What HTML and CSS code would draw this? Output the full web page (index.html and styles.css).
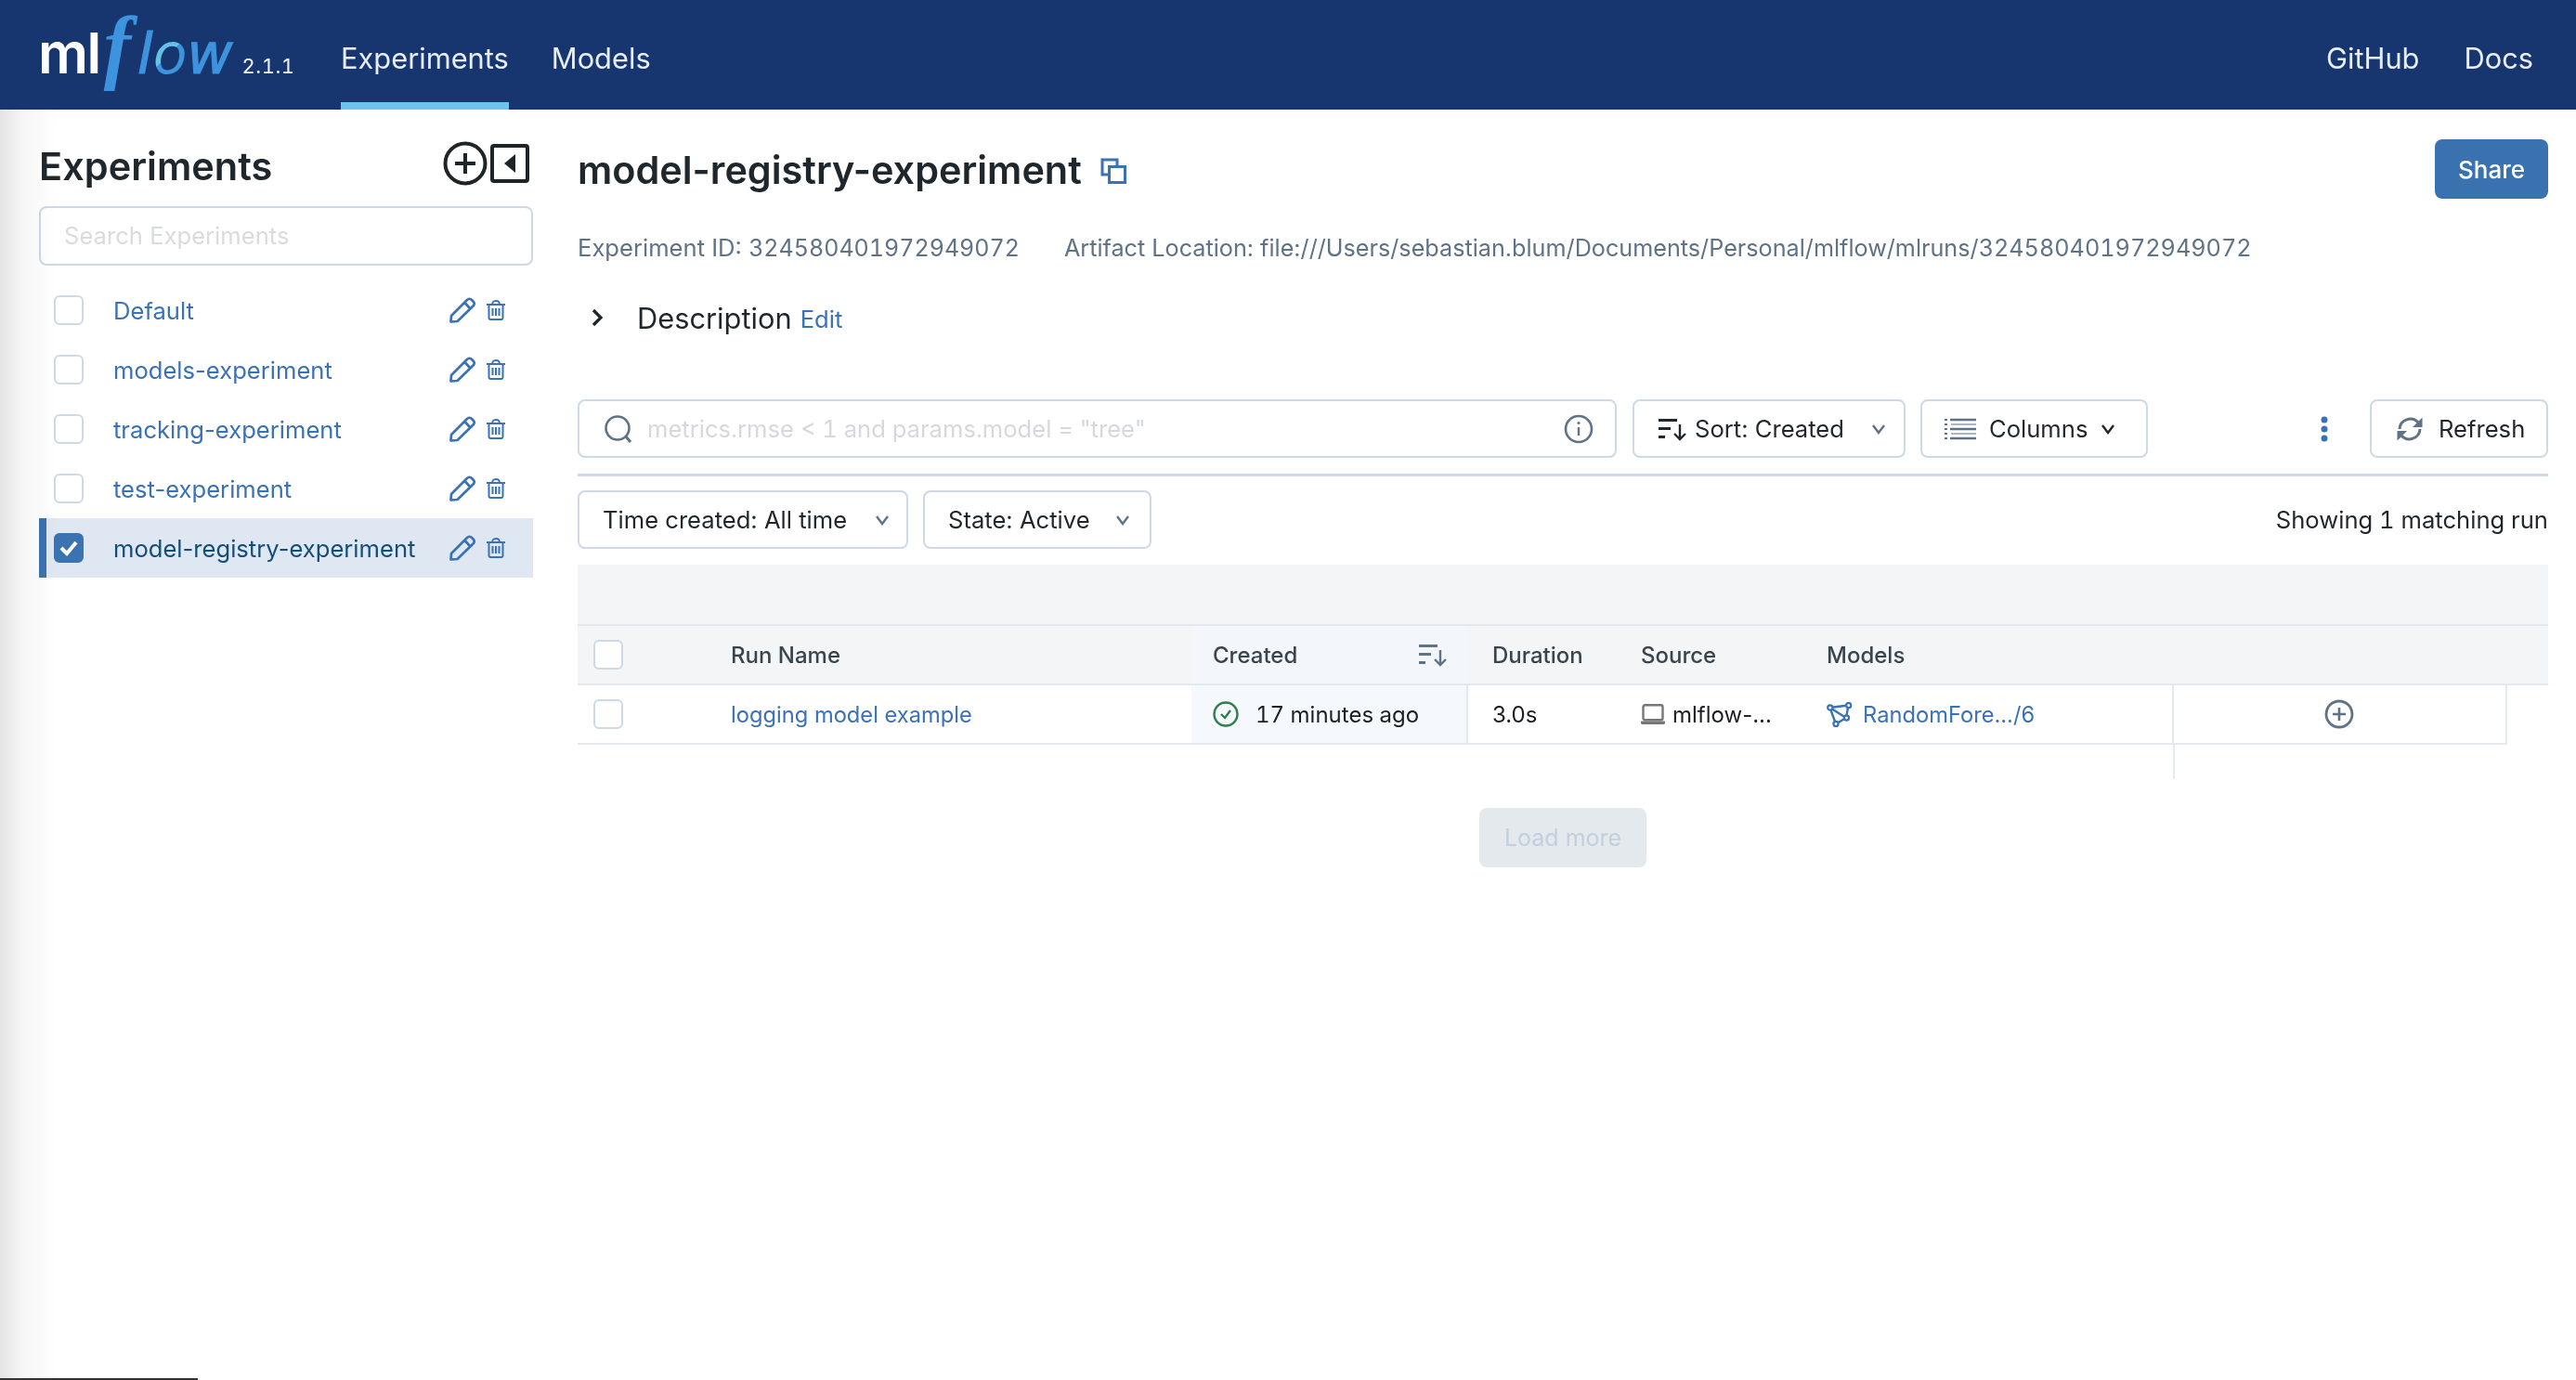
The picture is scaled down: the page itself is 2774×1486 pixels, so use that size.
FILE: index.html
```html
<!DOCTYPE html>
<html lang="en">
<head>
    <meta charset="UTF-8">
    <title>MLflow Experiments</title>
    <link rel="stylesheet" href="styles.css">
</head>
<body>
    <svg class="defs" width="0" height="0">
        <symbol id="pencil" viewBox="0 0 28 28"><path d="M1.500 26.500L2 20 19 3c1.700-1.700 3.500-1.700 5 0l1.500 1.500c1.700 1.700 1.500 3.500 0 5L8.500 26z M16.500 6l5.500 6" fill="none" stroke="currentColor" stroke-width="2.700" stroke-linejoin="round"/></symbol>
        <symbol id="trash" viewBox="0 0 22 22"><path d="M1 5h20 M7 5c0-2 1-4 4-4s4 2 4 4" fill="none" stroke="currentColor" stroke-width="1.800"/><path d="M3.500 5v14c0 1.500 1 2 2 2h11c1 0 2-.5 2-2V5" fill="none" stroke="currentColor" stroke-width="2"/><path d="M7.500 9v8 M11 9v8 M14.500 9v8" stroke="currentColor" stroke-width="2"/></symbol>
        <symbol id="sortdown" viewBox="0 0 30 26"><path d="M0 2h20v3H0z M0 11h13v3H0z M0 20h7v3H0z" fill="currentColor"/><path d="M23 8v16 M17 18l6 6 6-6" fill="none" stroke="currentColor" stroke-width="2.400"/></symbol>
        <symbol id="chev" viewBox="0 0 16 12"><path d="M2 2l6 8 6-8" fill="none" stroke="currentColor" stroke-width="2.400"/></symbol>
    </svg>

    <!-- top nav -->
    <header class="topbar">
        <div class="logo">
            <span class="logo-ml">ml</span><span class="logo-f">f</span><span class="logo-l">l</span><span class="logo-o">o</span><span class="logo-w">w</span>
            <span class="version">2.1.1</span>
        </div>
        <nav class="nav">
            <a class="nav-link active">Experiments</a>
            <a class="nav-link">Models</a>
        </nav>
        <div class="nav-right">
            <a class="nav-link">GitHub</a>
            <a class="nav-link">Docs</a>
        </div>
    </header>

    <div class="page">
        <aside class="sidebar">
            <div class="side-head">
                <h2>Experiments</h2>
                <div class="side-icons">
                    <svg width="48" height="48" viewBox="0 0 48 48"><circle cx="24" cy="24" r="21.500" fill="none" stroke="#1f2429" stroke-width="4"/><path d="M24 13v22 M13 24h22" stroke="#1f2429" stroke-width="4"/></svg>
                    <svg width="42" height="42" viewBox="0 0 42 42"><rect x="2" y="2" width="38" height="38" rx="2" fill="none" stroke="#1f2429" stroke-width="4"/><path d="M27 11v20L15 21z" fill="#1f2429"/></svg>
                </div>
            </div>
            <div class="side-search">Search Experiments</div>
            <ul class="exp-list">
                <li class="exp-row"><span class="check"></span><a class="exp-name">Default</a><svg class="ic-pencil"><use href="#pencil"/></svg><svg class="ic-trash"><use href="#trash"/></svg></li>
                <li class="exp-row"><span class="check"></span><a class="exp-name">models-experiment</a><svg class="ic-pencil"><use href="#pencil"/></svg><svg class="ic-trash"><use href="#trash"/></svg></li>
                <li class="exp-row"><span class="check"></span><a class="exp-name">tracking-experiment</a><svg class="ic-pencil"><use href="#pencil"/></svg><svg class="ic-trash"><use href="#trash"/></svg></li>
                <li class="exp-row"><span class="check"></span><a class="exp-name">test-experiment</a><svg class="ic-pencil"><use href="#pencil"/></svg><svg class="ic-trash"><use href="#trash"/></svg></li>
                <li class="exp-row selected"><span class="check checked"><svg width="22" height="18" viewBox="0 0 22 18"><path d="M3 9l6 6L19 3" fill="none" stroke="#fff" stroke-width="4"/></svg></span><a class="exp-name">model-registry-experiment</a><svg class="ic-pencil"><use href="#pencil"/></svg><svg class="ic-trash"><use href="#trash"/></svg></li>
            </ul>
        </aside>

        <main class="main">
            <div class="title-row">
                <h1>model-registry-experiment</h1>
                <svg class="copy" width="28" height="28" viewBox="0 0 28 28"><path d="M18 8V2H2v16h6" fill="none" stroke="#3b72b6" stroke-width="3"/><rect x="9.500" y="9.500" width="17" height="17" fill="none" stroke="#3b72b6" stroke-width="3"/></svg>
                <button class="share">Share</button>
            </div>
            <div class="meta">
                <span>Experiment ID: <span class="num id-num">324580401972949072</span></span>
                <span class="meta-path">Artifact Location: file:///Users/sebastian.blum/Documents/Personal/mlflow/mlruns/<span class="num">324580401972949072</span></span>
            </div>
            <div class="desc">
                <svg width="14" height="22" viewBox="0 0 14 22"><path d="M3 3l8 8-8 8" fill="none" stroke="#1f2429" stroke-width="3.200"/></svg>
                <span class="desc-label">Description</span>
                <a class="desc-edit">Edit</a>
            </div>

            <div class="toolbar">
                <div class="box query">
                    <svg width="32" height="32" viewBox="0 0 32 32"><circle cx="15" cy="15" r="12.500" fill="none" stroke="#5f7286" stroke-width="2.600"/><path d="M24 24l5 6" stroke="#5f7286" stroke-width="3"/></svg>
                    <span class="placeholder num">metrics.rmse &lt; 1 and params.model = "tree"</span>
                    <svg class="info" width="32" height="32" viewBox="0 0 32 32"><circle cx="16" cy="16" r="14" fill="none" stroke="#5f7286" stroke-width="2.600"/><path d="M16 14v9" stroke="#5f7286" stroke-width="2.400"/><circle cx="16" cy="9.500" r="1.600" fill="#5f7286"/></svg>
                </div>
                <div class="box sort-btn">
                    <svg class="ic-sort"><use href="#sortdown"/></svg>
                    <span>Sort: Created</span>
                    <svg class="chev grey"><use href="#chev"/></svg>
                </div>
                <div class="box col-btn">
                    <svg width="34" height="24" viewBox="0 0 34 24"><path d="M6 2h28 M6 12h28 M6 22h28" stroke="#5f7286" stroke-width="2.600"/><path d="M0 2h3 M0 7h3 M0 12h3 M0 17h3 M0 22h3" stroke="#5f7286" stroke-width="1.800"/><path d="M7 7h27 M7 17h27" stroke="#8fa0b0" stroke-width="1.600"/></svg>
                    <span>Columns</span>
                    <svg class="chev dark"><use href="#chev"/></svg>
                </div>
                <svg class="kebab" width="10" height="30" viewBox="0 0 10 30"><circle cx="5" cy="5" r="3.500" fill="#3b72b6"/><circle cx="5" cy="15" r="3.500" fill="#3b72b6"/><circle cx="5" cy="25" r="3.500" fill="#3b72b6"/></svg>
                <div class="box refresh">
                    <svg width="30" height="30" viewBox="0 0 30 30"><path d="M4 15A11.500 11.500 0 0 1 24 8 M26 15A11.500 11.500 0 0 1 6 22" fill="none" stroke="#5f7286" stroke-width="3"/><path d="M28.500 2.500v10.500H18z M1.500 27.500V17H12z" fill="#5f7286"/></svg>
                    <span>Refresh</span>
                </div>
            </div>

            <div class="filters">
                <div class="box time-btn"><span>Time created: All time</span><svg class="chev grey"><use href="#chev"/></svg></div>
                <div class="box state-btn"><span>State: Active</span><svg class="chev grey"><use href="#chev"/></svg></div>
                <span class="showing num">Showing 1 matching run</span>
            </div>

            <div class="grid">
                <div class="band"></div>
                <div class="grid-head">
                    <div class="c-check"><span class="check"></span></div>
                    <div class="c-name">Run Name</div>
                    <div class="c-created sorted">Created<svg class="ic-sort-head"><use href="#sortdown"/></svg></div>
                    <div class="c-dur">Duration</div>
                    <div class="c-src">Source</div>
                    <div class="c-models">Models</div>
                </div>
                <div class="grid-row">
                    <div class="c-check"><span class="check"></span></div>
                    <div class="c-name"><a class="link">logging model example</a></div>
                    <div class="c-created cell-sorted">
                        <svg width="28" height="28" viewBox="0 0 28 28"><circle cx="14" cy="14" r="12.500" fill="none" stroke="#2f7d4a" stroke-width="2.400"/><path d="M9 14l4 4 6-8" fill="none" stroke="#2f7d4a" stroke-width="2.400"/></svg>
                        <span class="num">17 minutes ago</span>
                    </div>
                    <div class="c-dur">3.0s</div>
                    <div class="c-src">
                        <svg width="26" height="22" viewBox="0 0 26 22"><rect x="2.500" y="1.200" width="21" height="16" rx="2" fill="none" stroke="#777" stroke-width="2.400"/><path d="M0 18.500h26v2c0 .8-.6 1.500-1.500 1.500h-23C.6 22 0 21.300 0 20.500z" fill="#777"/></svg>
                        <span>mlflow-...</span>
                    </div>
                    <div class="c-models">
                        <svg width="28" height="27" viewBox="0 0 28 27"><path d="M3.500 6L23.500 3.500 21 17 10 23.500z M3.500 6L21 17" fill="none" stroke="#3b72b6" stroke-width="2.400"/><circle cx="3.800" cy="6" r="2.600" fill="#fff" stroke="#3b72b6" stroke-width="2.200"/><circle cx="23.700" cy="3.500" r="2.600" fill="#fff" stroke="#3b72b6" stroke-width="2.200"/><circle cx="21.500" cy="17" r="2.600" fill="#fff" stroke="#3b72b6" stroke-width="2.200"/><circle cx="10" cy="23.500" r="2.600" fill="#fff" stroke="#3b72b6" stroke-width="2.200"/></svg>
                        <a class="link">RandomFore.../6</a>
                    </div>
                    <div class="c-add">
                        <svg width="32" height="32" viewBox="0 0 32 32"><circle cx="16" cy="16" r="14" fill="none" stroke="#5f7286" stroke-width="2.800"/><path d="M16 9v14 M9 16h14" stroke="#5f7286" stroke-width="2.600"/></svg>
                    </div>
                </div>
                <div class="grid-tail"></div>
            </div>
            <div class="load-wrap"><button class="load-more">Load more</button></div>
        </main>
    </div>

    <!-- window shadow from the screen capture -->
    <div class="edge-shadow"></div>
    <div class="edge-line"></div>
</body>
</html>
```

FILE: styles.css
```css
* {
    box-sizing: border-box;
}
html, body {
    height: 100%;
}
body {
    margin: 0;
    background: #fff;
    color: #1f272d;
    font-family: Inter, "Noto Sans", sans-serif;
    font-size: 25.6px;
    overflow: hidden;
}
.defs {
    display: block;
    height: 0;
}
a {
    text-decoration: none;
}
.num {
    font-variant-numeric: tabular-nums;
}

/* top nav */
.topbar {
    display: flex;
    height: 118px;
    background: #17366f;
    padding: 0 46px 0 41px;
    color: #e8eef8;
}
.logo {
    display: flex;
    align-items: baseline;
    width: 326px;
    height: 110px;
    padding-top: 6px;
    line-height: 1;
}
.logo-ml {
    font-size: 60px;
    font-weight: 600;
    color: #fff;
    letter-spacing: -1.500px;
}
.logo-f {
    font-family: "Liberation Serif", serif;
    font-style: italic;
    font-weight: 700;
    font-size: 88px;
    color: #3d93dd;
    margin: 0 7px 0 4px;
}
.logo-l, .logo-o, .logo-w {
    font-family: "DejaVu Sans", sans-serif;
    font-size: 60px;
    font-style: italic;
    font-weight: 400;
    color: #3d93dd;
    -webkit-text-stroke: 1.200px #3d93dd;
}
.logo-o {
    background: linear-gradient(135deg, #62c3ea 50%, #3d93dd 50%);
    -webkit-background-clip: text;
    background-clip: text;
    color: transparent;
    -webkit-text-stroke: 0;
}
.version {
    font-size: 22px;
    font-variant-numeric: tabular-nums;
    letter-spacing: .5px;
    margin-left: 10px;
    color: #eef3fa;
}
.nav {
    display: flex;
    gap: 46px;
}
.nav-right {
    display: flex;
    gap: 48px;
    margin-left: auto;
}
.nav-link {
    display: block;
    height: 118px;
    line-height: 126px;
    font-size: 30.800px;
    color: #e8eef8;
}
.nav-link.active {
    border-bottom: 8px solid #6bc5ea;
}

.page {
    display: flex;
    height: calc(100% - 118px);
}

/* left list */
.sidebar {
    width: 622px;
    padding: 0 48px 0 42px;
}
.side-head {
    display: flex;
    align-items: center;
    justify-content: space-between;
    height: 104px;
    padding: 18px 4px 0 0;
}
.side-head h2 {
    margin: 0;
    font-size: 41.500px;
    font-weight: 600;
    color: #1f272d;
}
.side-icons {
    display: flex;
    align-items: center;
    gap: 3px;
    margin-top: -6px;
}
.side-search {
    height: 64px;
    border: 2px solid #cdd9e5;
    border-radius: 8px;
    padding-left: 25px;
    line-height: 60px;
    color: #d9dcdf;
}
.exp-list {
    list-style: none;
    margin: 16px 0 0;
    padding: 0;
}
.exp-row {
    display: flex;
    align-items: center;
    height: 64px;
    padding-left: 16px;
}
.exp-row.selected {
    background: #dfe7f2;
    border-left: 8px solid #3b72b0;
    padding-left: 8px;
}
.check {
    display: flex;
    align-items: center;
    justify-content: center;
    flex: none;
    width: 32px;
    height: 32px;
    border: 2px solid #cdd9e5;
    border-radius: 6px;
    background: #fff;
}
.check.checked {
    background: #3b72b0;
    border-color: #3b72b0;
}
.exp-name {
    flex: 1;
    margin-left: 32px;
    color: #3b72b6;
}
.selected .exp-name {
    color: #144e77;
}
.ic-pencil {
    width: 28px;
    height: 28px;
    color: #3b72b6;
}
.ic-trash {
    width: 22px;
    height: 22px;
    margin: 0 29px 0 11px;
    color: #3b72b6;
}

/* main column */
.main {
    flex: 1;
    padding-right: 30px;
}
.title-row {
    display: flex;
    align-items: center;
    height: 64px;
    margin-top: 32px;
}
.title-row h1 {
    margin: 2px 20px 0 0;
    font-size: 41.400px;
    font-weight: 600;
    color: #1f272d;
}
.copy {
    margin-top: 4px;
}
.share {
    margin-left: auto;
    width: 122px;
    height: 64px;
    border: none;
    border-radius: 8px;
    background: #3a72b0;
    color: #fff;
    font: 500 26px Inter, sans-serif;
}
.meta {
    display: flex;
    gap: 48px;
    margin-top: 37px;
    line-height: 32px;
    color: #5f7286;
}
.id-num {
    font-size: 25px;
}
.meta-path {
    font-size: 25.200px;
}
.desc {
    display: flex;
    align-items: center;
    height: 44px;
    margin-top: 37px;
    padding-left: 14px;
}
.desc-label {
    margin-left: 36px;
    font-size: 30.800px;
}
.desc-edit {
    margin: 2px 0 0 9px;
    color: #3b72b6;
}

.box {
    display: flex;
    align-items: center;
    height: 63px;
    border: 2px solid #cdd9e5;
    border-radius: 8px;
    background: #fff;
}
.toolbar {
    display: flex;
    align-items: center;
    margin-top: 66px;
    padding-bottom: 17px;
    border-bottom: 3px solid #cdd9e5;
}
.query {
    width: 1119px;
    padding-left: 26px;
}
.placeholder {
    margin-left: 15px;
    color: #d5d9dd;
}
.info {
    margin-left: auto;
    margin-right: 23px;
}
.sort-btn {
    width: 294px;
    margin-left: 17px;
    padding-left: 26px;
}
.ic-sort {
    width: 30px;
    height: 26px;
    margin-right: 9px;
    color: #1f272d;
}
.chev {
    width: 16px;
    height: 12px;
    margin-left: auto;
}
.chev.grey {
    color: #5f7286;
}
.chev.dark {
    color: #1f272d;
}
.sort-btn .chev {
    margin-right: 19px;
}
.col-btn {
    width: 245px;
    margin-left: 16px;
    padding-left: 24px;
}
.col-btn span {
    margin-left: 14px;
}
.col-btn .chev {
    margin-right: 33px;
}
.kebab {
    margin-left: auto;
    margin-right: 44px;
}
.refresh {
    width: 192px;
    padding-left: 26px;
}
.refresh span {
    margin-left: 16px;
}
.filters {
    display: flex;
    align-items: center;
    margin-top: 15px;
}
.time-btn {
    width: 356px;
    padding-left: 25px;
}
.time-btn .chev {
    margin-right: 18px;
}
.state-btn {
    width: 246px;
    margin-left: 16px;
    padding-left: 25px;
}
.state-btn .chev {
    margin-right: 21px;
}
.showing {
    margin-left: auto;
}

/* runs table */
.grid {
    margin-top: 17px;
}
.band {
    height: 66px;
    background: #f3f5f7;
    border-bottom: 2px solid #e3e9ef;
}
.grid-head, .grid-row {
    display: grid;
    grid-template-columns: 165px 496px 298px 186px 200px 374px 359px;
    align-items: center;
    height: 64px;
    font-size: 24px;
}
.grid-head {
    background: #f3f5f7;
    border-bottom: 2px solid #e3e9ef;
    font-weight: 500;
    color: #3a444d;
}
.grid-row {
    width: 2078px;
    border-bottom: 2px solid #e3e9ef;
    border-right: 2px solid #e3e9ef;
    color: #1a1f24;
}
.grid-head > div, .grid-row > div {
    display: flex;
    align-items: center;
    height: 100%;
}
.c-check {
    padding-left: 17px;
}
.c-created {
    padding-left: 23px;
    gap: 18px;
}
.c-created.sorted {
    background: #f3f7fb;
    justify-content: space-between;
    padding-right: 23px;
}
.cell-sorted {
    background: #f5f9fd;
    border-right: 2px solid #e3e9ef;
}
.c-dur {
    padding-left: 26px;
}
.c-src {
    gap: 8px;
}
.c-models {
    gap: 11px;
    border-right: 2px solid #e3e9ef;
}
.grid-head .c-models {
    border-right: none;
}
.c-add {
    justify-content: center;
    padding-right: 4px;
}
.ic-sort-head {
    width: 30px;
    height: 26px;
    color: #5f7286;
}
.link {
    color: #3b72b6;
    font-size: 23.700px;
}
.grid-tail {
    width: 1720px;
    height: 37px;
    border-right: 2px solid #e3e9ef;
}
.load-wrap {
    display: flex;
    justify-content: center;
    margin-top: 31px;
}
.load-more {
    width: 180px;
    height: 64px;
    border: none;
    border-radius: 8px;
    background: #e3e9ed;
    color: #c3cfdd;
    font: 400 25px Inter, sans-serif;
}

/* capture artefacts along the window edge */
.edge-shadow {
    position: absolute;
    left: 0;
    top: 118px;
    bottom: 0;
    width: 62px;
    background: linear-gradient(to right, #e4e4e4, #f6f6f6 40%, #fff);
    mix-blend-mode: multiply;
    pointer-events: none;
}
.edge-line {
    position: absolute;
    left: 0;
    bottom: 0;
    width: 213px;
    height: 2px;
    background: #333;
}
```
